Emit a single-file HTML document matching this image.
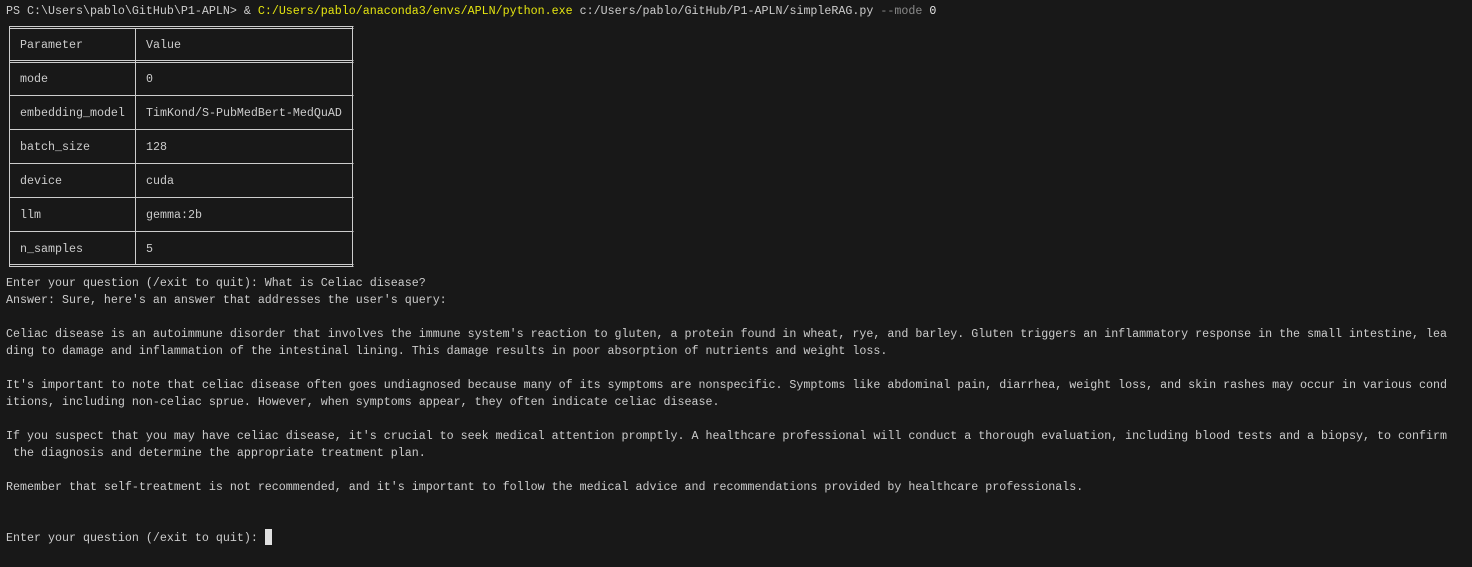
<!DOCTYPE html>
<html><head><style>
html,body{margin:0;padding:0;background:#181818;width:1472px;height:567px;overflow:hidden}
.l{position:absolute;left:6px;font-family:"Liberation Mono",monospace;font-size:11.67px;color:#cccccc;white-space:pre;line-height:17px}
.y{color:#e5e510}.g{color:#8a8a8a}.w{color:#e8e8e8}
</style></head><body>
<div class="l" style="top:3px">PS C:\Users\pablo\GitHub\P1-APLN&gt; &amp; <span class="y">C:/Users/pablo/anaconda3/envs/APLN/python.exe</span> c:/Users/pablo/GitHub/P1-APLN/simpleRAG.py <span class="g">--mode</span> <span class="w">0</span></div>
<svg style="position:absolute;left:0;top:0" width="400" height="280">
<g stroke="#cccccc" stroke-width="1" fill="none" shape-rendering="crispEdges">
<line x1="9.5" y1="26.5" x2="353.5" y2="26.5"/>
<line x1="9.5" y1="28.5" x2="353.5" y2="28.5"/>
<line x1="9.5" y1="26" x2="9.5" y2="267"/>
<line x1="352.5" y1="26" x2="352.5" y2="267"/>
<line x1="135.5" y1="28" x2="135.5" y2="265"/>
<line x1="9.5" y1="60.5" x2="353.5" y2="60.5"/>
<line x1="9.5" y1="62.5" x2="353.5" y2="62.5"/>
<line x1="9.5" y1="95.5" x2="353.5" y2="95.5"/>
<line x1="9.5" y1="129.5" x2="353.5" y2="129.5"/>
<line x1="9.5" y1="163.5" x2="353.5" y2="163.5"/>
<line x1="9.5" y1="197.5" x2="353.5" y2="197.5"/>
<line x1="9.5" y1="231.5" x2="353.5" y2="231.5"/>
<line x1="9.5" y1="264.5" x2="353.5" y2="264.5"/>
<line x1="9.5" y1="266.5" x2="353.5" y2="266.5"/>
</g></svg>
<div class="l" style="top:37px;left:20px">Parameter</div><div class="l" style="top:37px;left:146px">Value</div>
<div class="l" style="top:71px;left:20px">mode</div><div class="l" style="top:71px;left:146px">0</div>
<div class="l" style="top:105px;left:20px">embedding_model</div><div class="l" style="top:105px;left:146px">TimKond/S-PubMedBert-MedQuAD</div>
<div class="l" style="top:139px;left:20px">batch_size</div><div class="l" style="top:139px;left:146px">128</div>
<div class="l" style="top:173px;left:20px">device</div><div class="l" style="top:173px;left:146px">cuda</div>
<div class="l" style="top:207px;left:20px">llm</div><div class="l" style="top:207px;left:146px">gemma:2b</div>
<div class="l" style="top:241px;left:20px">n_samples</div><div class="l" style="top:241px;left:146px">5</div>
<div class="l" style="top:275px">Enter your question (/exit to quit): What is Celiac disease?
Answer: Sure, here's an answer that addresses the user's query:

Celiac disease is an autoimmune disorder that involves the immune system's reaction to gluten, a protein found in wheat, rye, and barley. Gluten triggers an inflammatory response in the small intestine, lea
ding to damage and inflammation of the intestinal lining. This damage results in poor absorption of nutrients and weight loss.

It's important to note that celiac disease often goes undiagnosed because many of its symptoms are nonspecific. Symptoms like abdominal pain, diarrhea, weight loss, and skin rashes may occur in various cond
itions, including non-celiac sprue. However, when symptoms appear, they often indicate celiac disease.

If you suspect that you may have celiac disease, it's crucial to seek medical attention promptly. A healthcare professional will conduct a thorough evaluation, including blood tests and a biopsy, to confirm
 the diagnosis and determine the appropriate treatment plan.

Remember that self-treatment is not recommended, and it's important to follow the medical advice and recommendations provided by healthcare professionals.


Enter your question (/exit to quit): </div>
<div style="position:absolute;left:265px;top:529px;width:7px;height:16px;background:#e0e0e0"></div>
</body></html>
